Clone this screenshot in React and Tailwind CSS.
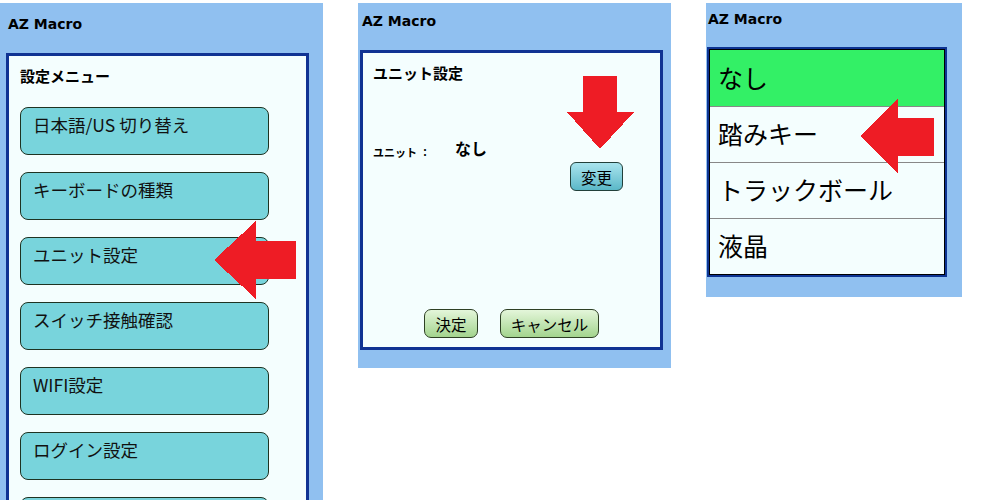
export default function App() {
  const menu = [
    "日本語/US 切り替え",
    "キーボードの種類",
    "ユニット設定",
    "スイッチ接触確認",
    "WIFI設定",
    "ログイン設定",
    "",
  ];
  const units = ["なし", "踏みキー", "トラックボール", "液晶"];
  return (
    <div className="relative w-[1000px] h-[500px] overflow-hidden bg-white text-black font-['Noto_Sans_CJK_JP',sans-serif]">
      <div className="flex items-start pt-[3px]">
        {/* Panel 1 */}
        <div className="w-[323px] h-[540px] shrink-0 bg-[#90c0f0] flex flex-col">
          <div className="h-[50px] shrink-0 pl-[8px] pt-[13px] font-['DejaVu_Sans',sans-serif] font-bold text-[14px] leading-[17px]">
            AZ Macro
          </div>
          <div className="ml-[6px] w-[303px] flex-1 border-[3px] border-[#103393] bg-[#f4fefe] px-[11px] pt-[10px]">
            <div className="text-[15px] font-bold leading-[20px]">設定メニュー</div>
            <div className="mt-[21px] flex flex-col gap-[17px]">
              {menu.map((m, i) => (
                <div
                  key={i}
                  className="w-[249px] h-[48px] shrink-0 rounded-[8px] border border-[#1e3322] bg-[#78d4dc] pl-[12px] pt-[5px] text-[17.5px] leading-[24px] text-[#111]"
                >
                  {m}
                </div>
              ))}
            </div>
          </div>
        </div>

        {/* Panel 2 */}
        <div className="ml-[35px] w-[313px] h-[365px] shrink-0 bg-[#90c0f0] flex flex-col">
          <div className="h-[47px] shrink-0 pl-[4px] pt-[10px] font-['DejaVu_Sans',sans-serif] font-bold text-[14px] leading-[17px]">
            AZ Macro
          </div>
          <div className="ml-[2px] w-[303px] h-[300px] border-[3px] border-[#103393] bg-[#f4fefe] px-[10px] pt-[10px] pb-[9px] flex flex-col">
            <div className="text-[15px] font-bold leading-[20px]">ユニット設定</div>
            <div className="mt-[53px] flex items-start">
              <div className="w-[82px] mt-[8px] text-[11px] font-bold leading-[16px]">ユニット ：</div>
              <div className="text-[16px] font-bold leading-[24px]">なし</div>
            </div>
            <div className="mt-[2px] flex justify-end pr-[27px]">
              <div className="w-[53px] h-[29px] rounded-[6px] border border-[#22403a] bg-gradient-to-b from-[#a8e4ee] to-[#5ab8c8] flex items-center justify-center text-[15.5px] leading-[20px]">
                変更
              </div>
            </div>
            <div className="mt-auto flex justify-center gap-[22px]">
              <div className="w-[54px] h-[29px] rounded-[7px] border border-[#2e4024] bg-gradient-to-b from-[#e4f6da] to-[#a3d48e] flex items-center justify-center text-[15.5px] leading-[20px]">
                決定
              </div>
              <div className="w-[99px] h-[29px] rounded-[7px] border border-[#2e4024] bg-gradient-to-b from-[#e4f6da] to-[#a3d48e] flex items-center justify-center text-[15.5px] leading-[20px]">
                キャンセル
              </div>
            </div>
          </div>
        </div>

        {/* Panel 3 */}
        <div className="ml-[35px] w-[256px] h-[294px] shrink-0 bg-[#90c0f0] flex flex-col">
          <div className="h-[44px] shrink-0 pl-[2px] pt-[8px] font-['DejaVu_Sans',sans-serif] font-bold text-[14px] leading-[17px]">
            AZ Macro
          </div>
          <div className="ml-[1px] w-[240px] border-2 border-[#0d3392]">
            <div className="border border-black bg-[#f4fefe]">
              {units.map((u, i) => (
                <div
                  key={u}
                  className={
                    i === 0
                      ? "h-[56px] flex items-center pl-[8px] pb-[3px] bg-[#33f066] text-[25px] leading-[30px]"
                      : "h-[56px] flex items-center pl-[8px] pb-[3px] border-t border-[#888888] text-[25px] leading-[30px]"
                  }
                >
                  {u}
                </div>
              ))}
            </div>
          </div>
        </div>
      </div>

      <svg
        className="absolute left-0 top-0 pointer-events-none"
        width="1000"
        height="500"
        viewBox="0 0 1000 500"
        shapeRendering="crispEdges"
      >
        <polygon
          fill="#ee1c25"
          points="214,260 256,221 256,241 296,241 296,279 256,279 256,299"
        />
        <polygon
          fill="#ee1c25"
          points="583,76 617,76 617,112 634,112 600,149 567,112 583,112"
        />
        <polygon
          fill="#ee1c25"
          points="860,136 898,99 898,118 934,118 934,156 898,156 898,174"
        />
      </svg>
    </div>
  );
}
